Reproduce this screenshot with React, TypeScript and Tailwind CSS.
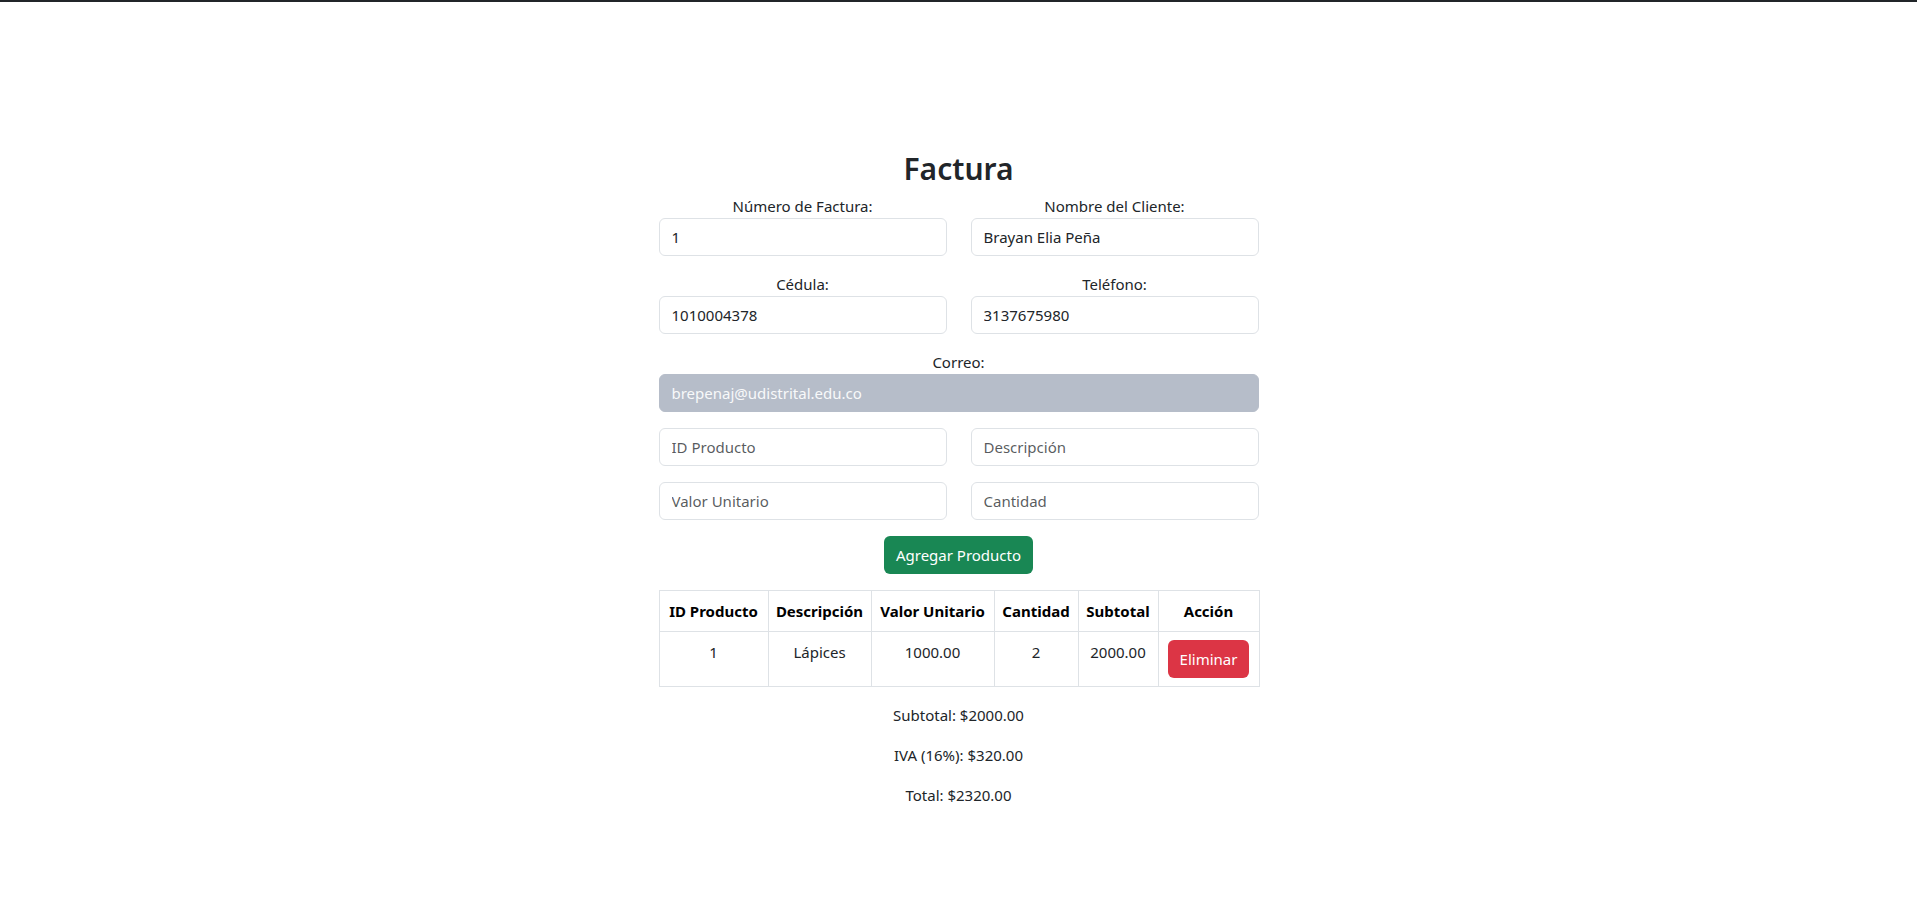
import React from "react";

const font = { fontFamily: '"Segoe UI", "Noto Sans", "Liberation Sans", sans-serif' };

function Field({ label, value }: { label: string; value: string }) {
  return (
    <div className="mb-4">
      <label className="block text-center text-[15px] leading-6 text-[#212529]">{label}</label>
      <input
        readOnly
        value={value}
        className="block h-[38px] w-full rounded-[6px] border border-[#dee2e6] bg-white px-3 text-[15px] leading-6 text-[#212529] outline-none"
      />
    </div>
  );
}

function Placeholder({ text }: { text: string }) {
  return (
    <div className="mb-4">
      <input
        placeholder={text}
        className="block h-[38px] w-full rounded-[6px] border border-[#dee2e6] bg-white px-3 text-[15px] leading-6 text-[#212529] outline-none placeholder:text-[#212529bf]"
      />
    </div>
  );
}

export default function App() {
  return (
    <div className="min-h-screen bg-white text-[15px] text-[#212529]" style={font}>
      <div className="h-[2px] bg-[#212529]" />
      <div className="mx-auto w-[600px] pt-[148px]">
        <h2 className="mb-[6px] text-center text-[30px] font-semibold leading-[38px] text-[#212529]">Factura</h2>
        <div className="grid grid-cols-2 gap-x-6">
          <Field label="Número de Factura:" value="1" />
          <Field label="Nombre del Cliente:" value="Brayan Elia Peña" />
          <Field label="Cédula:" value="1010004378" />
          <Field label="Teléfono:" value="3137675980" />
        </div>
        <div className="mb-4">
          <label className="block text-center text-[15px] leading-6">Correo:</label>
          <input
            disabled
            value="brepenaj@udistrital.edu.co"
            className="block h-[38px] w-full rounded-[6px] border border-[#b6bdc9] bg-[#b6bdc9] px-3 text-[15px] leading-6 text-[#f8f9fa] outline-none"
          />
        </div>
        <div className="grid grid-cols-2 gap-x-6">
          <Placeholder text="ID Producto" />
          <Placeholder text="Descripción" />
          <Placeholder text="Valor Unitario" />
          <Placeholder text="Cantidad" />
        </div>
        <div className="mb-4 flex justify-center">
          <button className="h-[38px] rounded-[6px] bg-[#198754] px-3 text-[15px] leading-6 text-white">
            Agregar Producto
          </button>
        </div>
        <table className="mb-4 w-[600px] table-fixed border-collapse border border-[#dee2e6] text-[15px] leading-6">
          <colgroup>
            <col className="w-[109px]" />
            <col className="w-[103px]" />
            <col className="w-[123px]" />
            <col className="w-[84px]" />
            <col className="w-[80px]" />
            <col className="w-[101px]" />
          </colgroup>
          <thead>
            <tr>
              {["ID Producto", "Descripción", "Valor Unitario", "Cantidad", "Subtotal", "Acción"].map((h) => (
                <th key={h} className="whitespace-nowrap border border-[#dee2e6] px-1 py-2 text-center font-bold text-black">
                  {h}
                </th>
              ))}
            </tr>
          </thead>
          <tbody>
            <tr>
              {["1", "Lápices", "1000.00", "2", "2000.00"].map((c, i) => (
                <td key={i} className="border border-[#dee2e6] px-2 py-2 text-center align-top text-[#212529]">
                  {c}
                </td>
              ))}
              <td className="border border-[#dee2e6] px-2 py-2 text-center align-top">
                <button className="h-[38px] rounded-[6px] bg-[#dc3545] px-3 text-[15px] leading-6 text-white">Eliminar</button>
              </td>
            </tr>
          </tbody>
        </table>
        <p className="mb-4 text-center leading-6">Subtotal: $2000.00</p>
        <p className="mb-4 text-center leading-6">IVA (16%): $320.00</p>
        <p className="mb-4 text-center leading-6">Total: $2320.00</p>
      </div>
    </div>
  );
}
